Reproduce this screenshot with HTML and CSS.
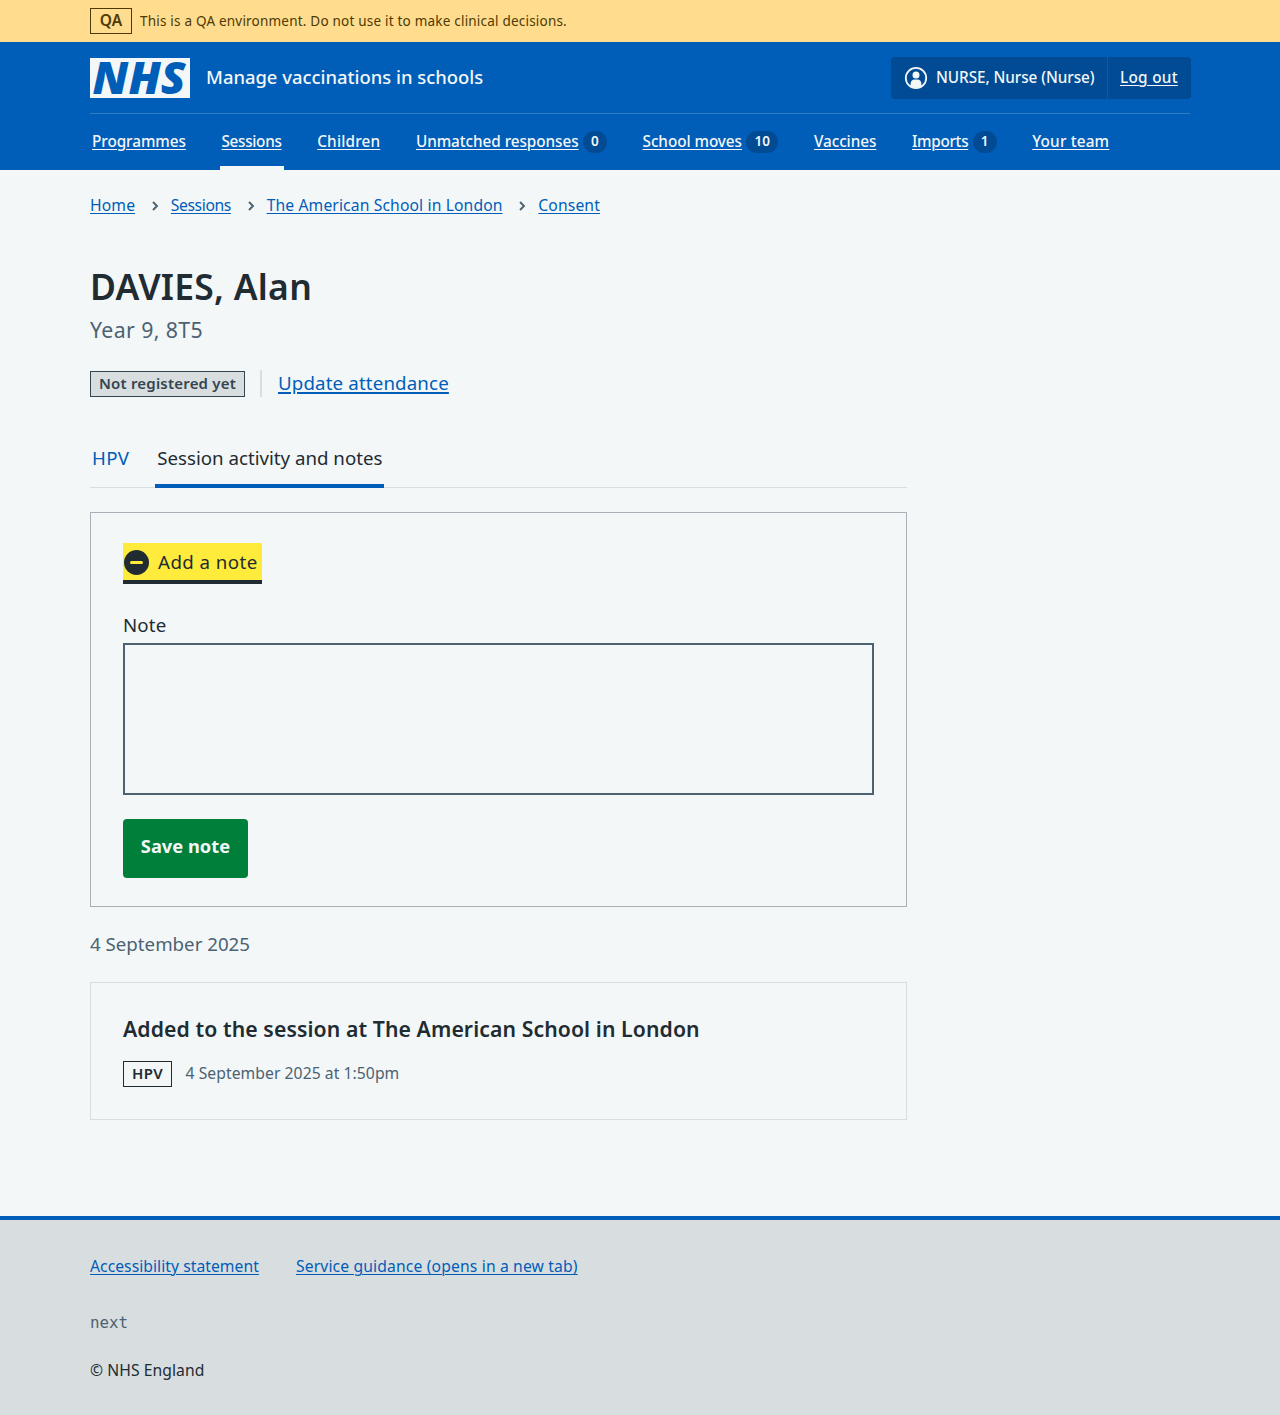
FILE: index.html
```html
<!DOCTYPE html>
<html lang="en">
<head>
<meta charset="utf-8">
<title>DAVIES, Alan – Manage vaccinations in schools</title>
<link rel="stylesheet" href="styles.css">
</head>
<body>
<div class="environment">
  <div class="container environment-row">
    <strong class="environment-tag">QA</strong>
    <span>This is a QA environment. Do not use it to make clinical decisions.</span>
  </div>
</div>

<header class="header">
  <div class="container header-top">
    <a class="service" href="#">
      <svg class="logo" viewBox="0 0 100 40" width="100" height="40" role="img" aria-label="NHS">
        <rect width="100" height="40" class="logo-box"/>
        <text x="2.6" y="36" class="logo-text" textLength="93" lengthAdjust="spacingAndGlyphs">NHS</text>
      </svg>
      <span class="service-name">Manage vaccinations in schools</span>
    </a>
    <div class="account">
      <span class="account-user">
        <svg width="24" height="24" viewBox="0 0 24 24" aria-hidden="true">
          <circle cx="12" cy="12" r="10.2" fill="none" stroke="currentColor" stroke-width="1.8"/>
          <circle cx="12" cy="9" r="3.5" fill="currentColor"/>
          <path d="M6.600 20.200v-2.400c0-2.600 1.600-4.300 4-4.300h2.800c2.400 0 4 1.700 4 4.300v2.400a10 10 0 0 1-10.800 0z" fill="currentColor"/>
        </svg>
        <span class="account-name">NURSE, Nurse (Nurse)</span>
      </span>
      <a class="account-logout" href="#">Log out</a>
    </div>
  </div>
  <nav class="container nav">
    <div class="nav-item"><a class="nav-link" href="#">Programmes</a></div>
    <div class="nav-item nav-item-current"><a class="nav-link nav-link-tight" href="#">Sessions</a></div>
    <div class="nav-item"><a class="nav-link nav-link-wide" href="#">Children</a></div>
    <div class="nav-item"><a class="nav-link" href="#">Unmatched responses</a><span class="count">0</span></div>
    <div class="nav-item"><a class="nav-link" href="#">School moves</a><span class="count count-wide">10</span></div>
    <div class="nav-item"><a class="nav-link" href="#">Vaccines</a></div>
    <div class="nav-item"><a class="nav-link nav-link-tight" href="#">Imports</a><span class="count">1</span></div>
    <div class="nav-item"><a class="nav-link nav-link-wide" href="#">Your team</a></div>
  </nav>
</header>

<main class="container main">
  <nav class="breadcrumb">
    <a href="#">Home</a>
    <svg class="chevron" width="6" height="10" viewBox="0 0 6 10"><path d="M1 1l4 4-4 4"/></svg>
    <a class="breadcrumb-tight" href="#">Sessions</a>
    <svg class="chevron" width="6" height="10" viewBox="0 0 6 10"><path d="M1 1l4 4-4 4"/></svg>
    <a href="#">The American School in London</a>
    <svg class="chevron" width="6" height="10" viewBox="0 0 6 10"><path d="M1 1l4 4-4 4"/></svg>
    <a href="#">Consent</a>
  </nav>

  <h1 class="patient-name">DAVIES, Alan</h1>
  <p class="patient-year">Year 9, 8T5</p>

  <div class="status">
    <strong class="tag tag-grey">Not registered yet</strong>
    <span class="status-divider"></span>
    <a class="status-link" href="#">Update attendance</a>
  </div>

  <div class="column">
    <nav class="tabs">
      <a class="tab tab-short" href="#">HPV</a>
      <a class="tab tab-current" href="#">Session activity and notes</a>
    </nav>

    <section class="card note-card">
      <div class="summary">
        <svg width="26" height="26" viewBox="0 0 26 26" aria-hidden="true">
          <circle cx="13.500" cy="13.500" r="12.500" fill="#212b32"/>
          <path d="M8.500 13.500h10" stroke="#ffeb3b" stroke-width="3" stroke-linecap="round"/>
        </svg>
        <span>Add a note</span>
      </div>
      <label class="label" for="note">Note</label>
      <textarea class="textarea" id="note"></textarea>
      <button class="button" type="button">Save note</button>
    </section>

    <h2 class="date">4 September 2025</h2>

    <section class="card event-card">
      <h3 class="event-title">Added to the session at The American School in London</h3>
      <div class="event-meta">
        <strong class="tag tag-outline">HPV</strong>
        <span>4 September 2025 at 1:50pm</span>
      </div>
    </section>
  </div>
</main>

<footer class="footer">
  <div class="container">
    <div class="footer-links">
      <a class="footer-statement" href="#">Accessibility statement</a>
      <a href="#">Service guidance (opens in a new tab)</a>
    </div>
    <p class="version">next</p>
    <p class="copyright">© NHS England</p>
  </div>
</footer>
</body>
</html>
```
FILE: styles.css
```css
* { box-sizing: border-box; }

:root {
  --paper: #f3f7f8;
  --ink: #212b32;
  --muted: #4c6272;
  --blue: #005eb8;
  --blue-dark: #004b93;
  --line: #d8dde0;
}

body {
  margin: 0;
  display: flex;
  flex-direction: column;
  min-height: 1415px;
  background: var(--paper);
  color: var(--ink);
  font: 400 18.7px/28px "Noto Sans", "Open Sans", sans-serif;
}

h1, h2, h3, p { margin: 0; }
a { color: var(--blue); text-underline-offset: 2px; text-decoration-thickness: 1px; }
svg { display: block; flex: none; overflow: visible; }

.container { width: 1100px; margin: 0 auto; }

.environment { background: #ffdc8e; color: #4d3a05; font-size: 13.5px; letter-spacing: 0.208px; }
.environment-row { display: flex; align-items: center; gap: 8px; height: 42px; }
.environment-tag {
  width: 42px;
  height: 26px;
  border: 1px solid currentColor;
  font-size: 15.5px;
  font-weight: 600;
  line-height: 23px;
  text-align: center;
}

.header { height: 128px; background: var(--blue); color: var(--paper); }
.header a { color: inherit; }
.header-top {
  display: flex;
  justify-content: space-between;
  height: 72px;
  padding-top: 15px;
  border-bottom: 1px solid #337ec6;
}
.service { display: flex; gap: 16px; padding-top: 1px; text-decoration: none; }
.logo-box { fill: var(--paper); }
.logo-text { fill: var(--blue); font-size: 45px; font-weight: 900; font-style: italic; }
.service-name { font-size: 18.4px; font-weight: 500; line-height: 38px; }
.account {
  display: flex;
  width: 300px;
  height: 42px;
  margin-right: -1px;
  border-radius: 4px;
  background: var(--blue-dark);
  font-size: 15.3px;
  font-weight: 500;
  line-height: 41px;
}
.account-user {
  display: flex;
  align-items: center;
  gap: 8px;
  width: 217px;
  padding-left: 13px;
  border-right: 1px solid var(--blue);
}
.account-name { padding-bottom: 1px; letter-spacing: -0.06px; white-space: nowrap; }
.account-logout { padding-left: 12px; letter-spacing: 0.3px; }

.nav { display: flex; gap: 31.7px; height: 56px; }
.nav-item { display: flex; align-items: center; height: 56px; padding: 0 2px; border-bottom: 4px solid transparent; }
.nav-item-current { border-bottom-color: var(--paper); }
.nav-link { padding-top: 1px; font-size: 15.3px; font-weight: 500; letter-spacing: -0.06px; }
.nav-link-tight { letter-spacing: -0.32px; }
.nav-link-wide { letter-spacing: 0.18px; }
.count {
  width: 24px;
  height: 22px;
  margin: 4px 0 0 4.3px;
  border-radius: 11px;
  background: var(--blue-dark);
  font-size: 13.5px;
  font-weight: 600;
  line-height: 21px;
  text-align: center;
}
.count-wide { width: 32px; }

.main { flex: 1; }
.breadcrumb {
  display: flex;
  align-items: center;
  padding-top: 23px;
  font-size: 15.7px;
  line-height: 24px;
  letter-spacing: 0.12px;
}
.breadcrumb-tight { letter-spacing: -0.39px; }
.chevron { margin: 2px 13px 0 16.7px; fill: none; stroke: var(--muted); stroke-width: 1.9; }

.patient-name { margin-top: 47px; font-size: 35.5px; font-weight: 600; line-height: 44px; letter-spacing: 0.25px; }
.patient-year { margin-top: 6px; color: var(--muted); font-size: 21.3px; line-height: 32px; letter-spacing: 0.37px; }

.status { display: flex; align-items: center; margin-top: 24px; height: 27px; }
.tag { height: 26px; border: 1px solid currentColor; font-size: 15px; font-weight: 600; line-height: 23px; text-align: center; }
.tag-grey { width: 155px; margin-top: 1px; background: var(--line); color: #354550; letter-spacing: 0.2px; }
.tag-outline { width: 49px; letter-spacing: 0.3px; }
.status-divider { width: 2px; height: 27px; margin: 0 16px 0 15px; background: var(--line); }
.status-link { padding-bottom: 1px; letter-spacing: 0.147px; text-decoration-thickness: 1.5px; }

.column { width: 817px; }
.tabs { display: flex; gap: 24px; margin-top: 33px; border-bottom: 1px solid var(--line); }
.tab {
  height: 58px;
  margin-bottom: -1px;
  padding: 0 2px;
  border-bottom: 4px solid transparent;
  line-height: 56px;
  text-decoration: none;
}
.tab-short { letter-spacing: 0.3px; }
.tab-current { border-bottom-color: var(--blue); color: var(--ink); }

.card { border: 1px solid var(--line); padding: 0 32px; }
.note-card { height: 395px; margin-top: 24px; padding-top: 30px; border-color: #a6b0b6; }
.summary {
  display: flex;
  align-items: center;
  gap: 9px;
  width: 139px;
  height: 41px;
  border-bottom: 4px solid var(--ink);
  background: #ffeb3b;
  letter-spacing: 0.45px;
  white-space: nowrap;
}
.summary svg { margin-top: 1px; }
.label { display: block; margin-top: 27px; letter-spacing: 0.17px; }
.textarea {
  display: block;
  width: 751px;
  height: 152px;
  margin-top: 4px;
  border: 2px solid var(--muted);
  background: transparent;
  resize: none;
}
.button {
  display: block;
  width: 125px;
  height: 59px;
  margin-top: 24px;
  padding: 0 0 5px;
  border: 0;
  border-radius: 4px;
  background: #007f3b;
  color: var(--paper);
  font: inherit;
  font-size: 18.3px;
  font-weight: 700;
}
.date { margin-top: 23px; color: var(--muted); font-size: 18.7px; font-weight: 400; }
.event-card { height: 138px; margin-top: 24px; padding-top: 30px; }
.event-title { font-size: 21.2px; font-weight: 600; line-height: 32px; letter-spacing: 0.095px; white-space: nowrap; }
.event-meta { display: flex; gap: 13.5px; margin-top: 16px; font-size: 15.7px; line-height: 24px; letter-spacing: 0.057px; }
.event-meta span { color: var(--muted); }

.footer { height: 199px; padding-top: 34px; border-top: 4px solid var(--blue); background: var(--line); font-size: 15.7px; line-height: 24px; }
.footer-links { display: flex; gap: 37px; letter-spacing: 0.142px; }
.footer-statement { letter-spacing: 0.043px; }
.version { margin-top: 33px; color: var(--muted); font-family: "DejaVu Sans Mono", monospace; font-size: 15.8px; }
.copyright { margin-top: 23px; letter-spacing: 0.06px; }
```
